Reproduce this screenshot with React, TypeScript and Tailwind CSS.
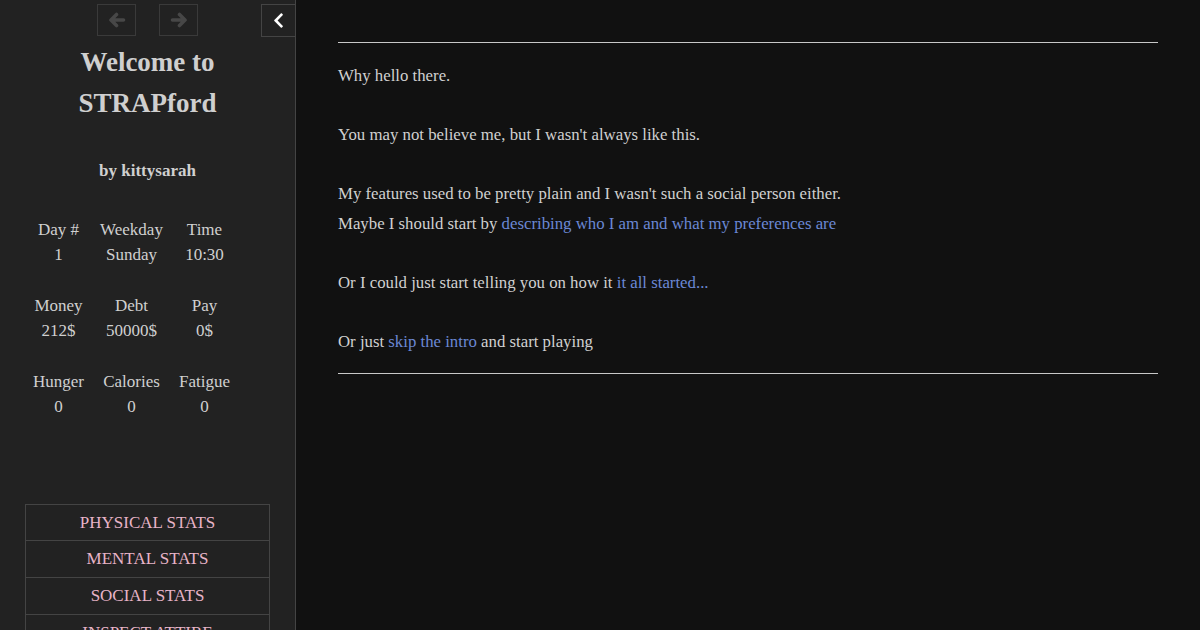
import { FaChevronLeft } from "react-icons/fa";

const stats = [
  [
    ["Day #", "1"],
    ["Weekday", "Sunday"],
    ["Time", "10:30"],
  ],
  [
    ["Money", "212$"],
    ["Debt", "50000$"],
    ["Pay", "0$"],
  ],
  [
    ["Hunger", "0"],
    ["Calories", "0"],
    ["Fatigue", "0"],
  ],
];

const menu = ["PHYSICAL STATS", "MENTAL STATS", "SOCIAL STATS", "INSPECT ATTIRE"];

function Link({ children }: { children: React.ReactNode }) {
  return <a className="text-[#6b88d4] cursor-pointer">{children}</a>;
}

function Arrow({ flip }: { flip?: boolean }) {
  return (
    <svg width="18" height="16" viewBox="0 0 18 16" className={flip ? "-scale-x-100" : ""}>
      <path
        d="M15.5 8H3.5M8.5 2.5L3 8l5.5 5.5"
        fill="none"
        stroke="currentColor"
        strokeWidth="3.6"
        strokeLinecap="round"
        strokeLinejoin="round"
      />
    </svg>
  );
}

export default function App() {
  return (
    <div className="flex h-[630px] w-[1200px] overflow-hidden bg-[#111] font-['Liberation_Serif',serif] text-[17px] text-[#d0d0d0]">
      {/* sidebar */}
      <aside className="relative flex w-[296px] shrink-0 flex-col border-r border-[#444] bg-[#222]">
        <div className="flex justify-center gap-[23px] pt-[4px]">
          <button className="flex h-[32px] w-[39px] items-center justify-center border border-[#3a3a3a] text-[#474747]">
            <Arrow />
          </button>
          <button className="flex h-[32px] w-[39px] items-center justify-center border border-[#3a3a3a] text-[#474747]">
            <Arrow flip />
          </button>
        </div>
        <button className="absolute right-0 top-[4px] flex h-[33px] w-[34px] items-center justify-center border border-r-0 border-[#444] text-white">
          <FaChevronLeft size={17} />
        </button>

        <h1 className="mt-[6px] text-center text-[27px] font-bold leading-[41px] text-[#cfcfcf]">
          Welcome to
          <br />
          STRAPford
        </h1>
        <div className="mt-[34px] text-center font-bold leading-[25.5px]">by kittysarah</div>

        <div className="ml-[22px] mt-[33px] flex w-[219px] flex-col gap-[26px]">
          {stats.map((row, i) => (
            <div key={i} className="grid grid-cols-3 leading-[25px]">
              {row.map(([label, value]) => (
                <div key={label} className="text-center">
                  <div>{label}</div>
                  <div>{value}</div>
                </div>
              ))}
            </div>
          ))}
        </div>

        <div className="mx-auto mt-[85px] w-[245px] border-t border-[#444]">
          {menu.map((m) => (
            <div
              key={m}
              className="flex h-[36.7px] items-center justify-center border-x border-b border-[#444] text-[#e8b4c8]"
            >
              {m}
            </div>
          ))}
        </div>
      </aside>

      {/* passage */}
      <main className="flex-1 px-[42px] pt-[42px]">
        <div className="border-t border-[#c8c8c8]" />
        <div className="pb-[16px] pt-[18px] text-[16.8px] leading-[29.6px]">
          Why hello there.
          <br />
          <br />
          You may not believe me, but I wasn't always like this.
          <br />
          <br />
          My features used to be pretty plain and I wasn't such a social person either.
          <br />
          Maybe I should start by <Link>describing who I am and what my preferences are</Link>
          <br />
          <br />
          Or I could just start telling you on how it <Link>it all started...</Link>
          <br />
          <br />
          Or just <Link>skip the intro</Link> and start playing
        </div>
        <div className="border-t border-[#c8c8c8]" />
      </main>
    </div>
  );
}
